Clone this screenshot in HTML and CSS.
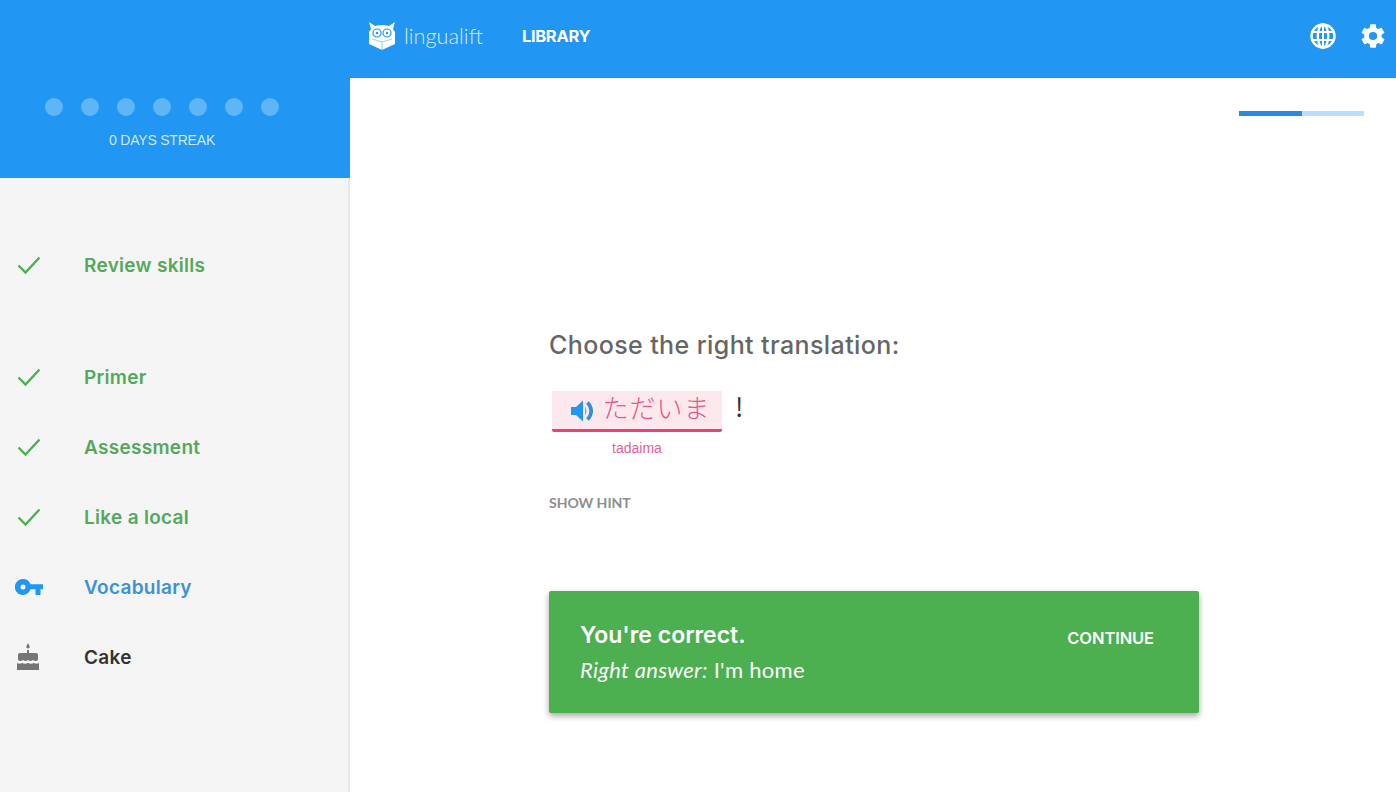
FILE: index.html
```html
<!DOCTYPE html>
<html lang="en">

<head>
    <meta charset="UTF-8">
    <title>LinguaLift</title>
    <link rel="stylesheet" href="styles.css">
</head>

<body>
    <header class="topbar">
        <div class="brand">
            <svg class="brand-icon" viewBox="0 0 28 30" width="28" height="30">
                <path fill="#fff" d="M1 1l6 4q7-2 14 0l6-4-2 7 2 3v12l-11 5q-2 1-4 0L1 23V11l2-3z"/>
                <circle cx="9" cy="12" r="4" fill="none" stroke="#2196f3" stroke-width="1.2"/>
                <circle cx="19" cy="12" r="4" fill="none" stroke="#2196f3" stroke-width="1.2"/>
                <circle cx="9" cy="12" r="1.2" fill="#2196f3"/>
                <circle cx="19" cy="12" r="1.2" fill="#2196f3"/>
                <path fill="none" stroke="#a9d6fa" stroke-width="1.2" d="M4 18l10 3 10-3M14 21v7"/>
            </svg>
            <span class="brand-name">lingualift</span>
        </div>
        <a class="nav-link">LIBRARY</a>
        <div class="top-icons">
            <svg viewBox="0 0 28 28" width="28" height="28">
                <g fill="none" stroke="#fff" stroke-width="2.4">
                    <circle cx="14" cy="14" r="11.5"/>
                    <ellipse cx="14" cy="14" rx="5.2" ry="11.5"/>
                    <path d="M14 2.5v23M3 10h22M3 18h22" stroke-width="2"/>
                </g>
            </svg>
            <svg viewBox="0 0 24 24" width="28" height="28">
                <path fill="#fff" fill-rule="evenodd" d="M19.4 13c.04-.32.07-.66.07-1s-.03-.68-.07-1l2.100-1.650c.2-.15.25-.42.12-.64l-2-3.460c-.12-.22-.38-.3-.6-.22l-2.500 1c-.5-.4-1.080-.72-1.700-.98l-.37-2.650A.5.5 0 0 0 14 2h-4a.5.5 0 0 0-.5.42l-.37 2.650c-.62.26-1.170.58-1.700.98l-2.500-1c-.22-.08-.48 0-.6.22l-2 3.460c-.13.22-.07.49.12.64L4.570 11c-.04.32-.07.66-.07 1s.03.68.07 1l-2.100 1.650c-.2.15-.25.42-.12.64l2 3.460c.12.22.38.3.6.22l2.500-1c.5.4 1.080.72 1.700.98l.37 2.650c.03.24.24.42.5.42h4c.26 0 .47-.18.5-.42l.37-2.650c.62-.26 1.170-.58 1.700-.98l2.500 1c.22.08.48 0 .6-.22l2-3.460c.13-.22.07-.49-.12-.64L19.400 13zM12 15.500a3.500 3.500 0 1 1 0-7 3.500 3.500 0 0 1 0 7z"/>
            </svg>
        </div>
    </header>

    <div class="layout">
        <aside class="sidebar">
            <div class="streak">
                <div class="dots">
                    <span class="dot"></span><span class="dot"></span><span class="dot"></span><span class="dot"></span><span class="dot"></span><span class="dot"></span><span class="dot"></span>
                </div>
                <div class="streak-label">0 DAYS STREAK</div>
            </div>

            <ul class="lessons">
                <li class="lesson done review">
                    <svg class="check" viewBox="0 0 26 20" width="26" height="20"><path d="M2.500 10.500l7 7L23.500 2.500"/></svg>
                    <span>Review skills</span>
                </li>
                <li class="lesson done">
                    <svg class="check" viewBox="0 0 26 20" width="26" height="20"><path d="M2.500 10.500l7 7L23.500 2.500"/></svg>
                    <span>Primer</span>
                </li>
                <li class="lesson done">
                    <svg class="check" viewBox="0 0 26 20" width="26" height="20"><path d="M2.500 10.500l7 7L23.500 2.500"/></svg>
                    <span>Assessment</span>
                </li>
                <li class="lesson done">
                    <svg class="check" viewBox="0 0 26 20" width="26" height="20"><path d="M2.500 10.500l7 7L23.500 2.500"/></svg>
                    <span>Like a local</span>
                </li>
                <li class="lesson current">
                    <svg class="key" viewBox="0 0 28 16" width="28" height="16">
                        <path fill="#2196f3" fill-rule="evenodd" d="M8 0a8 8 0 0 1 7.500 5.200H28v5h-2.500v5.800h-5v-5.800h-5A8 8 0 1 1 8 0zm0 5.500a2.500 2.500 0 1 0 0 5 2.500 2.500 0 0 0 0-5z"/>
                    </svg>
                    <span>Vocabulary</span>
                </li>
                <li class="lesson locked">
                    <svg viewBox="0 0 24 28" width="24" height="28">
                        <path fill="#757575" d="M12 0l1.800 3.800a1.800 1.800 0 0 1-3.600 0zM11 7h2v3h-2zM4 10h16a2 2 0 0 1 2 2v5q-2.500 2-5 0-2.500 2-5 0-2.500 2-5 0-2.500 2-5 0v-5a2 2 0 0 1 2-2zM1 20q2.500 1.500 5 0 3 1.500 6 0 3 1.500 6 0 2.500 1.500 5 0v7H1z"/>
                    </svg>
                    <span>Cake</span>
                </li>
            </ul>
        </aside>

        <main class="content">
            <div class="progress"><div class="progress-fill"></div></div>

            <div class="exercise">
                <h2 class="prompt">Choose the right translation:</h2>

                <div class="phrase">
                    <div class="word">
                        <div class="word-box">
                            <svg viewBox="0 0 26 24" width="26" height="24">
                                <path fill="#2196f3" d="M1 8h5l7-6.500v21L6 16H1z"/>
                                <path fill="#64b5f6" d="M15 7.500q3 4.500 0 9z"/>
                                <path fill="none" stroke="#2f8fdc" stroke-width="3.500" d="M17.500 3.500q7.500 8.500 0 17"/>
                            </svg>
                            <span class="kana">ただいま</span>
                        </div>
                        <div class="reading">tadaima</div>
                    </div>
                    <span class="mark">!</span>
                </div>

                <a class="hint">SHOW HINT</a>

                <div class="result">
                    <div>
                        <div class="result-title">You're correct.</div>
                        <div class="result-answer"><em>Right answer:</em> I'm home</div>
                    </div>
                    <a class="continue">CONTINUE</a>
                </div>
            </div>
        </main>
    </div>
</body>

</html>
```
FILE: styles.css
```css
* {
    box-sizing: border-box;
}

body {
    font-family: "Open Sans", "Noto Sans CJK JP", sans-serif;
    margin: 0;
    height: 792px;
    overflow: hidden;
    background-color: #fff;
    display: flex;
    flex-direction: column;
}

.topbar {
    height: 78px;
    flex-shrink: 0;
    background-color: #2196f3;
    display: flex;
    align-items: center;
    padding: 0 9px 6px 368px;
    color: #fff;
}

.brand {
    display: flex;
    align-items: center;
    gap: 8px;
}

.brand-name {
    font-family: Lato, sans-serif;
    font-size: 21.700px;
    font-weight: 300;
    color: #d6ecfd;
}

.nav-link {
    margin-left: 39px;
    font-family: Inter, sans-serif;
    font-size: 16.500px;
    font-weight: 700;
    letter-spacing: -0.3px;
}

.top-icons {
    margin-left: auto;
    display: flex;
    align-items: center;
    gap: 22px;
}

.layout {
    flex: 1;
    display: flex;
    min-height: 0;
}

.sidebar {
    width: 350px;
    flex-shrink: 0;
    background-color: #f5f5f5;
    border-right: 2px solid #e8e8e8;
}

.streak {
    height: 100px;
    background-color: #2196f3;
    margin-right: -2px;
    padding-top: 20px;
    padding-right: 26px;
    display: flex;
    flex-direction: column;
    align-items: center;
}

.dots {
    display: flex;
    gap: 18px;
}

.dot {
    width: 18px;
    height: 18px;
    border-radius: 50%;
    background-color: #5eb6f7;
}

.streak-label {
    margin-top: 16px;
    font-family: "Liberation Sans", sans-serif;
    font-size: 14px;
    letter-spacing: -0.2px;
    color: #cfe8fc;
}

.lessons {
    list-style: none;
    margin: 0;
    padding: 52px 0 0 16px;
}

.lesson {
    height: 70px;
    display: flex;
    align-items: center;
    font-family: Inter, sans-serif;
    font-size: 19px;
    font-weight: 600;
    letter-spacing: 0.3px;
}

.lesson svg {
    flex-shrink: 0;
}

.lesson.review {
    margin-bottom: 42px;
}

.lesson.done {
    color: #55a85c;
}

.lesson.current {
    color: #3a92d8;
}

.lesson.locked {
    color: #333;
}

.lesson.done span {
    margin-left: 42px;
}

.lesson.current span {
    margin-left: 40px;
}

.lesson.locked span {
    margin-left: 44px;
}

.lesson .key {
    margin-left: -1px;
    margin-right: 1px;
}

.check path {
    fill: none;
    stroke: #4caf50;
    stroke-width: 2.400;
}

.content {
    flex: 1;
    padding-top: 33px;
    padding-right: 32px;
    display: flex;
    flex-direction: column;
}

.progress {
    align-self: flex-end;
    width: 125px;
    height: 5px;
    background-color: #bbdefb;
}

.progress-fill {
    width: 50%;
    height: 100%;
    background-color: #2a8ae0;
}

.exercise {
    margin-top: 212px;
    margin-left: 199px;
    width: 650px;
}

.prompt {
    margin: 0;
    font-family: Inter, sans-serif;
    font-size: 25px;
    font-weight: 500;
    letter-spacing: 0.4px;
    color: #666;
    line-height: 34px;
}

.phrase {
    display: flex;
    margin-top: 29px;
    margin-left: 3px;
}

.word {
    width: 170px;
}

.word-box {
    height: 41px;
    padding-left: 7px;
    background-color: #fde8ee;
    border-bottom: 3px solid #ec407a;
    border-radius: 0 0 2px 2px;
    display: flex;
    align-items: center;
    justify-content: center;
    gap: 6px;
}

.word-box svg {
    margin-top: 2px;
}

.kana {
    font-family: "Noto Sans CJK JP", sans-serif;
    font-size: 26px;
    font-weight: 300;
    letter-spacing: 1px;
    line-height: 34px;
    margin-bottom: 6px;
    color: #e8568a;
}

.reading {
    margin-top: 8px;
    text-align: center;
    font-family: "Liberation Sans", sans-serif;
    font-size: 14px;
    color: #e8609a;
}

.mark {
    margin-left: 13px;
    font-family: "Noto Sans CJK JP", sans-serif;
    font-size: 26px;
    font-weight: 400;
    color: #333;
    line-height: 30px;
}

.hint {
    display: block;
    margin-top: 38px;
    font-family: Lato, sans-serif;
    font-size: 14px;
    font-weight: 700;
    color: #8e8e8e;
}

.result {
    margin-top: 80px;
    height: 122px;
    padding: 0 45px 0 31px;
    background-color: #4caf50;
    border-radius: 2px;
    box-shadow: 0 3px 6px rgba(0, 0, 0, 0.35);
    color: #fff;
    display: flex;
    justify-content: space-between;
    align-items: center;
}

.result-title {
    font-family: Inter, sans-serif;
    font-size: 23px;
    font-weight: 600;
}

.result-answer {
    margin-top: 7px;
    font-family: Lato, sans-serif;
    font-size: 22px;
    letter-spacing: 0.3px;
}

.continue {
    margin-bottom: 28px;
    font-family: Inter, sans-serif;
    font-size: 16.500px;
    font-weight: 600;
    letter-spacing: -0.1px;
}
```
